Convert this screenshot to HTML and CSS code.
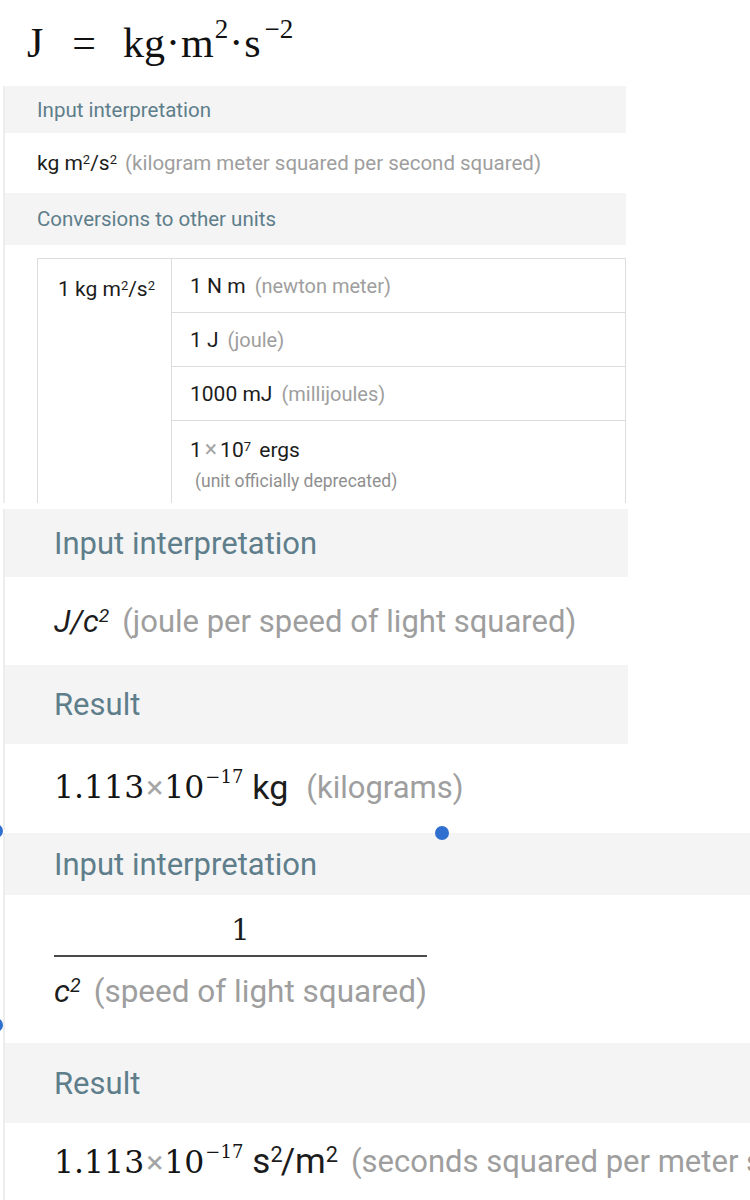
FILE: index.html
```html
<!DOCTYPE html>
<html>
<head>
<meta charset="utf-8">
<link rel="stylesheet" href="styles.css">
</head>
<body>
<div class="page">
  <div class="formula">
    <span class="f-j">J</span><span class="f-eq">=</span><span class="f-rhs">kg<span class="f-dot">·</span>m<sup class="f-sup">2</sup><span class="f-dot">·</span>s<sup class="f-sup f-neg">−2</sup></span>
  </div>

  <section class="pod pod-s">
    <div class="band band-s1">Input interpretation</div>
    <div class="row row-s1"><span class="unit">kg m<sup class="sup">2</sup>/s<sup class="sup">2</sup></span><span class="desc">(kilogram meter squared per second squared)</span></div>
    <div class="band band-s2">Conversions to other units</div>
    <div class="conv">
      <table class="conv-table">
        <tr>
          <td class="lc" rowspan="4">1 kg m<sup class="sup">2</sup>/s<sup class="sup">2</sup></td>
          <td class="rc">1 N m<span class="desc">(newton meter)</span></td>
        </tr>
        <tr><td class="rc">1 J<span class="desc">(joule)</span></td></tr>
        <tr><td class="rc">1000 mJ<span class="desc">(millijoules)</span></td></tr>
        <tr>
          <td class="rc rc-last">
            <div class="erg">1<span class="times">×</span>10<sup class="sup">7</sup> ergs</div>
            <div class="note">(unit officially deprecated)</div>
          </td>
        </tr>
      </table>
    </div>
  </section>

  <section class="pod pod-m">
    <div class="band band-m1">Input interpretation</div>
    <div class="row row-m1"><span class="unit ital">J/c<sup class="sup">2</sup></span><span class="desc">(joule per speed of light squared)</span></div>
    <div class="band band-m2">Result</div>
    <div class="row row-m2"><span class="num">1.113</span><span class="times">×</span><span class="num">10<sup class="sup-num">−17</sup></span><span class="unit unit-after">kg</span><span class="desc">(kilograms)</span></div>
  </section>

  <section class="pod pod-l">
    <div class="band band-l1">Input interpretation</div>
    <div class="row row-frac">
      <div class="frac">
        <div class="frac-num">1</div>
        <div class="frac-den"><span class="unit ital">c<sup class="sup">2</sup></span><span class="desc">(speed of light squared)</span></div>
      </div>
    </div>
    <div class="band band-l2">Result</div>
    <div class="row row-l2"><span class="num">1.113</span><span class="times">×</span><span class="num">10<sup class="sup-num">−17</sup></span><span class="unit unit-after">s<sup class="sup">2</sup><span class="slash">/</span>m<sup class="sup">2</sup></span><span class="desc">(seconds squared per meter squared)</span></div>
  </section>

  <span class="dot dot-a"></span>
  <span class="dot dot-b"></span>
  <span class="dot dot-c"></span>
</div>
</body>
</html>
```

FILE: styles.css
```css
* { box-sizing: border-box; }
html, body { margin: 0; padding: 0; background: #ffffff; }
body { font-family: Roboto, "Liberation Sans", sans-serif; color: #1c1c1c; }

.page { position: relative; width: 750px; height: 1200px; overflow: hidden; }

/* top formula */
.formula {
  height: 86px;
  padding: 22px 0 0 27px;
  font-family: "Liberation Serif", "DejaVu Serif", serif;
  font-size: 42px;
  line-height: 42px;
  color: #111;
  white-space: nowrap;
}
.f-eq { margin-left: 29px; }
.f-rhs { margin-left: 27px; }
.f-dot { margin: 0 1px; }
.f-sup { font-size: 27px; line-height: 0; vertical-align: 19px; margin-left: 1px; }
.f-neg { margin-left: 4px; }

/* pods */
.pod { margin-left: 3px; border-left: 2px solid #ededed; overflow: hidden; }
.band {
  display: flex;
  align-items: center;
  background: #f4f4f4;
  color: #5e7e8b;
  white-space: nowrap;
}
.row { display: flex; align-items: center; white-space: nowrap; }
.desc { color: #9e9e9e; }
.sup { font-size: 0.62em; line-height: 0; vertical-align: 0.5em; }
.ital { font-style: italic; }
.times { color: #a5a5a5; }

/* small pod */
.pod-s { width: 623px; height: 417px; }
.pod-s .band { padding-left: 32px; font-size: 20.5px; }
.band-s1 { height: 47px; }
.band-s2 { height: 52px; }
.row-s1 { height: 60px; padding-left: 32px; font-size: 21px; }
.row-s1 .desc { margin-left: 8px; font-size: 20.5px; }

.conv { padding: 13px 0 0 32px; }
.conv-table { border-collapse: collapse; width: 589px; font-size: 21px; }
.conv-table td { border: 1px solid #dcdcdc; }
.lc { width: 134px; vertical-align: top; padding: 18px 0 0 20px; line-height: 24px; white-space: nowrap; }
.rc { height: 54px; padding: 0 0 0 18px; line-height: 24px; white-space: nowrap; }
.rc .desc { margin-left: 9px; font-size: 20px; }
.rc-last { height: 100px; vertical-align: top; padding-top: 17px; }
.erg { line-height: 24px; }
.erg .times { margin: 0 3px; font-size: 23px; }
.erg .sup { margin-right: 3px; }
.note { margin-top: 8px; padding-left: 5px; font-size: 17.5px; color: #8f8f8f; line-height: 22px; }

/* medium pod */
.pod-m { width: 625px; margin-top: 6px; }
.pod-m .band, .pod-l .band { padding-left: 49px; font-size: 31px; }
.band-m1 { height: 68px; }
.band-m2 { height: 79px; }
.row-m1 { height: 88px; padding-left: 49px; font-size: 31px; }
.row-m2 { height: 86px; padding-left: 49px; font-size: 31px; }
.row-m1 .desc, .row-m2 .desc, .row-l2 .desc, .frac-den .desc { margin-left: 13px; }

.num { font-family: "DejaVu Serif", "Liberation Serif", serif; font-size: 31.5px; color: #151515; }
.sup-num { font-size: 18px; line-height: 0; vertical-align: 15px; margin-left: 1px; }
.row-m2 .times, .row-l2 .times { font-size: 32px; margin: 0 1px 0 2px; }
.unit-after { margin-left: 9px; font-size: 34px; }
.row-m2 .desc { margin-left: 18px; }

/* large pod */
.pod-l { width: 760px; margin-top: 3px; }
.band-l1 { height: 62px; }
.band-l2 { height: 80px; }
.row-frac { height: 148px; padding-left: 49px; align-items: flex-start; }
.frac { display: inline-flex; flex-direction: column; padding-top: 18px; }
.frac-num {
  font-family: "DejaVu Serif", "Liberation Serif", serif;
  font-size: 29px;
  line-height: 34px;
  text-align: center;
  padding-bottom: 8px;
  border-bottom: 2px solid #4a4a4a;
}
.frac-den { font-size: 31.5px; line-height: 36px; padding-top: 17px; white-space: nowrap; }
.row-l2 { height: 77px; padding-left: 49px; font-size: 31px; }
.row-l2 .unit-after { font-size: 35px; }
.slash { margin: 0 0 0 -2px; }

/* selection handles */
.dot {
  position: absolute;
  width: 14px;
  height: 14px;
  border-radius: 50%;
  background: #2f6fcf;
}
.dot-a { left: 435px; top: 826px; }
.dot-b { left: -11px; top: 824px; }
.dot-c { left: -11px; top: 1018px; }
```
